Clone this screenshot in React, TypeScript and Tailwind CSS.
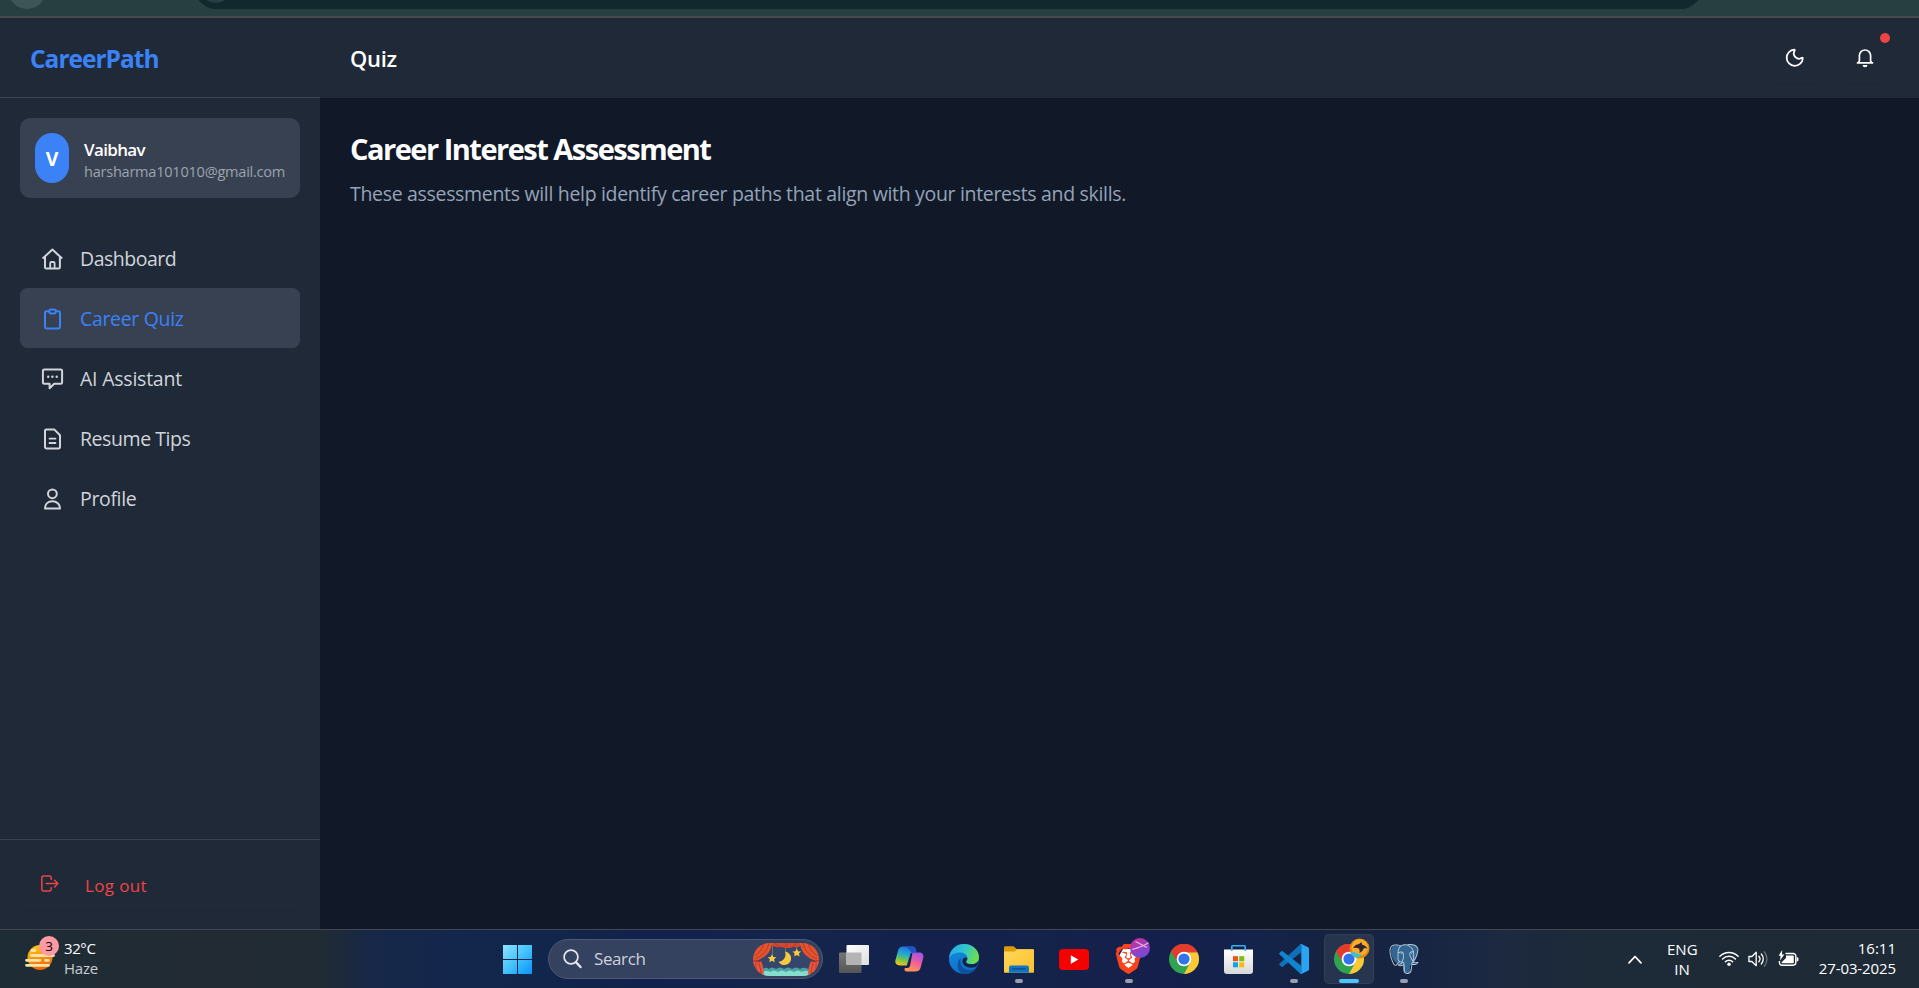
import type { ReactNode } from "react";
import { FaBrave } from "react-icons/fa6";
import { SiPostgresql } from "react-icons/si";
import { Moon } from "lucide-react";

function LineIcon({ children }: { children: ReactNode }) {
  return (
    <svg width="25" height="25" viewBox="0 0 25 25" fill="none" stroke="currentColor" strokeWidth="2" strokeLinejoin="round" className="shrink-0">
      {children}
    </svg>
  );
}

const homeIcon = (
  <LineIcon>
    <path d="M2.600 12.600 12.400 3.500l9.800 9.100" />
    <path d="M5 11v10.200a1.300 1.300 0 0 0 1.300 1.300h12.300a1.300 1.300 0 0 0 1.300-1.300V11" />
    <path d="M10.200 22.500v-5.300a1.200 1.200 0 0 1 1.200-1.200h2a1.200 1.200 0 0 1 1.200 1.200v5.300" strokeWidth="1.800" />
  </LineIcon>
);

const clipboardIcon = (
  <LineIcon>
    <path d="M9 5.200H6.400A1.400 1.400 0 0 0 5 6.600v14.500a1.400 1.400 0 0 0 1.400 1.400h12.200a1.400 1.400 0 0 0 1.400-1.400V6.600a1.400 1.400 0 0 0-1.400-1.400H16" />
    <rect x="9.200" y="3.400" width="6.600" height="4" rx="1.800" />
  </LineIcon>
);

const chatIcon = (
  <LineIcon>
    <path d="M4.400 3.400h16.200a1.500 1.500 0 0 1 1.500 1.500v11.300a1.500 1.500 0 0 1-1.500 1.500h-6.400l-4.600 4.600v-4.600H4.400a1.500 1.500 0 0 1-1.500-1.500V4.900a1.500 1.500 0 0 1 1.500-1.500Z" />
    <g fill="currentColor" stroke="none">
      <circle cx="8.200" cy="10.800" r="1.200" />
      <circle cx="12.400" cy="10.800" r="1.200" />
      <circle cx="16.700" cy="10.800" r="1.200" />
    </g>
  </LineIcon>
);

const documentIcon = (
  <LineIcon>
    <path d="M14.200 3.400H6.400A1.400 1.400 0 0 0 5 4.800v16.300a1.400 1.400 0 0 0 1.400 1.400h12.200a1.400 1.400 0 0 0 1.400-1.400V9.300Z" />
    <path d="M8.800 12.600h7.400M8.800 17h7.400" strokeWidth="1.800" />
  </LineIcon>
);

const profileIcon = (
  <LineIcon>
    <circle cx="12.400" cy="7.800" r="4.400" />
    <path d="M5 22.500c0-4.200 3-7.200 7.400-7.200s7.600 3 7.600 7.200Z" />
  </LineIcon>
);

const navItems = [
  { label: "Dashboard", icon: homeIcon, style: "text-[#d1d5db] tracking-[-0.5px]" },
  { label: "Career Quiz", icon: clipboardIcon, style: "bg-[#374151] text-[#3b82f6] tracking-[-0.33px]" },
  { label: "AI Assistant", icon: chatIcon, style: "text-[#d1d5db] tracking-[-0.23px]" },
  { label: "Resume Tips", icon: documentIcon, style: "text-[#d1d5db] tracking-[-0.43px]" },
  { label: "Profile", icon: profileIcon, style: "text-[#d1d5db] tracking-[-0.35px]" },
];

function BrowserStrip() {
  return (
    <div className="flex h-[18px] shrink-0 items-end overflow-hidden border-b-2 border-[#454a4a] bg-[#283f42]">
      <div className="mb-[7px] ml-[8px] h-[40px] w-[38px] shrink-0 rounded-full bg-[#3d5557]" />
      <div className="mb-[7px] ml-[149px] flex h-[42px] w-[1507px] shrink-0 items-end rounded-full bg-[#11292c]">
        <div className="mb-[6px] ml-[5px] size-[32px] rounded-full bg-[#283f42]" />
      </div>
    </div>
  );
}

function Sidebar() {
  return (
    <aside className="flex w-[320px] shrink-0 flex-col bg-[#1f2937]">
      <div className="flex h-[80px] items-center border-b border-[#374151] px-[30px] pt-1">
        <span className="text-[24.5px] font-bold tracking-[-1px] text-[#3b82f6]">CareerPath</span>
      </div>
      <div className="mx-5 mt-5 flex h-[80px] items-center rounded-[10px] bg-[#374151] px-[15px]">
        <div className="flex h-[50px] w-[34px] shrink-0 items-center justify-center rounded-full bg-[#3b82f6] pt-0.5 text-[19.5px] font-bold text-white">V</div>
        <div className="ml-[15px] flex flex-col">
          <span className="pt-px text-[17px] leading-[25px] font-semibold tracking-[-0.65px] text-white">Vaibhav</span>
          <span className="-mt-px text-[14.6px] leading-[20px] tracking-[-0.27px] text-[#9ca3af]">harsharma101010@gmail.com</span>
        </div>
      </div>
      <nav className="mx-5 mt-[30px] flex flex-1 flex-col">
        {navItems.map((item) => (
          <a key={item.label} className={`flex h-[60px] items-center gap-[15px] rounded-[7.5px] px-5 text-[19.5px] ${item.style}`}>
            {item.icon}
            <span className="pt-0.5">{item.label}</span>
          </a>
        ))}
      </nav>
      <div className="border-t border-[#374151] px-5 pt-5 pb-[19px]">
        <button className="flex h-[50px] w-full items-center rounded-[7.5px] pl-5 text-[#ef4444] shadow-xs">
          <svg width="20" height="20" viewBox="0 0 20 20" fill="none" stroke="currentColor" strokeWidth="1.500" className="-mt-[2px]">
            <path d="M11.200 6V3.900a1.800 1.800 0 0 0-1.800-1.800H3.600a1.800 1.800 0 0 0-1.800 1.800v11.400a1.800 1.800 0 0 0 1.800 1.800h5.800a1.800 1.800 0 0 0 1.800-1.800v-2.100" />
            <path d="M5.600 9.600h12M14.200 5.800l3.600 3.800-3.600 3.800" />
          </svg>
          <span className="ml-[25px] pt-0.5 text-[17px] font-medium tracking-[0.35px]">Log out</span>
        </button>
      </div>
    </aside>
  );
}

function PageHeader() {
  return (
    <header className="flex h-[80px] shrink-0 items-center justify-between bg-[#1f2937] pr-[29px] pl-[30px] shadow-xs">
      <h1 className="text-[22px] font-semibold tracking-[-0.3px] text-white">Quiz</h1>
      <div className="flex gap-5 text-white">
        <button className="flex size-[50px] items-center justify-center rounded-[7.5px] pb-px shadow-xs">
          <Moon size={21.5} strokeWidth={2} />
        </button>
        <button className="relative flex size-[50px] items-center justify-center rounded-[7.5px] pb-px shadow-xs">
          <svg width="20" height="20" viewBox="0 0 20 20" fill="none" stroke="currentColor" strokeWidth="1.700" strokeLinejoin="round">
            <path d="M1.800 14.900h16.400M3.500 14.900l.9-2V7.600a5.600 5.600 0 0 1 11.200 0v5.300l.9 2" />
            <path d="M7.600 17.100h4.800a2.400 2.200 0 0 1-4.800 0Z" fill="currentColor" stroke="none" />
          </svg>
          <span className="absolute top-0 right-0 size-[10px] rounded-full bg-[#ef4444]" />
        </button>
      </div>
    </header>
  );
}

function WindowsLogo() {
  return (
    <svg width="29" height="29" viewBox="0 0 29 29">
      <defs>
        <linearGradient id="win" gradientUnits="userSpaceOnUse" x1="0" y1="0" x2="29" y2="29">
          <stop offset="0" stopColor="#8fe3ff" />
          <stop offset="0.500" stopColor="#43c2fb" />
          <stop offset="1" stopColor="#0a93fb" />
        </linearGradient>
      </defs>
      <path fill="url(#win)" d="M0 0h14v14H0zM15 0h14v14H15zM0 15h14v14H0zM15 15h14v14H15z" />
    </svg>
  );
}

function CurtainArt() {
  return (
    <svg width="66" height="33" viewBox="0 0 66 33" className="rounded-full">
      <rect width="66" height="33" fill="#34466b" />
      <path d="M9 27q3-4 7-1 3-3 7 0 4-3 8 0 4-3 8 0 4-3 8 0 4-3 10 1v7H9Z" fill="#4aa39e" />
      <path d="M9 30q4-4 8-1 4-3 8 0 4-3 8 0 4-3 8 0 4-3 8 0 4-3 8 1v6H9Z" fill="#86dccd" />
      <path d="M19.500 0v14M32.500 3v6M43.500 0v8" stroke="#a07a3a" strokeWidth="0.800" />
      <path d="M32 8.500a6.800 6.800 0 1 1-6.500 10.300A7.500 7.500 0 0 0 32 8.500Z" fill="#f5c93f" />
      <path d="m19 11.200 1.300 2.700 3 .3-2.200 2 .6 3-2.700-1.500-2.700 1.500.6-3-2.200-2 3-.3ZM43.800 5.500l1.300 2.700 3 .3-2.200 2 .6 3-2.700-1.500-2.700 1.500.6-3-2.200-2 3-.3Z" fill="#fbcb3c" />
      <path d="M15 0h36q-4 5-10 4-6 2-12 0-8 1-14-4Z" fill="#d9442c" />
      <path d="M0 0h19q-1 14-19 19ZM66 0H47q1 14 19 19Z" fill="#e4532f" />
      <path d="M0 18h8q3 6 3 15H0ZM66 18h-8q-3 6-3 15h11Z" fill="#e6573f" />
      <path d="M0 17.500q5 2 9 .5M66 17.500q-5 2-9 .5" stroke="#b52b26" strokeWidth="1.300" fill="none" />
      <g stroke="#b93424" strokeWidth="0.900" fill="none">
        <path d="M16 0Q14 11 2 16M11 0Q9 8 2 13M6 0Q5 5 1 8M50 0q2 11 14 16M55 0q2 8 9 13M60 0q1 5 5 8" />
        <path d="M3 20v12M6 20q2 6 2 13M63 20v12M60 20q-2 6-2 13M22 0q2 3 5 4M44 0q-2 3-5 4M33 0v4" />
      </g>
    </svg>
  );
}

function TaskViewIcon() {
  return (
    <svg width="30" height="28" viewBox="0 0 30 28">
      <defs>
        <linearGradient id="tv1" x1="0" y1="0" x2="0" y2="1">
          <stop offset="0" stopColor="#777" />
          <stop offset="1" stopColor="#555" />
        </linearGradient>
        <linearGradient id="tv2" x1="0" y1="0" x2="1" y2="1">
          <stop offset="0" stopColor="#fff" />
          <stop offset="1" stopColor="#dedede" />
        </linearGradient>
      </defs>
      <rect y="7.500" width="22.500" height="20.500" rx="1" fill="url(#tv1)" />
      <rect x="7.500" width="22.500" height="20" rx="1" fill="url(#tv2)" />
      <path d="M7.500 7.500h15V20h-15Z" fill="#b4b4b4" />
    </svg>
  );
}

function CopilotIcon() {
  return (
    <svg width="29" height="26" viewBox="0 0 29 26">
      <defs>
        <linearGradient id="cpA" x1="0.600" y1="0" x2="0.300" y2="1">
          <stop offset="0" stopColor="#1a6fe0" />
          <stop offset="0.400" stopColor="#22a6d8" />
          <stop offset="0.700" stopColor="#6cc551" />
          <stop offset="1" stopColor="#f0c419" />
        </linearGradient>
        <linearGradient id="cpB" x1="0.700" y1="0" x2="0.300" y2="1">
          <stop offset="0" stopColor="#a452e8" />
          <stop offset="0.500" stopColor="#f0609a" />
          <stop offset="1" stopColor="#ff9b4a" />
        </linearGradient>
      </defs>
      <path d="M17.500 6.500H24c4 0 5 2.500 4.200 5.500l-2.600 9.500c-.8 3-2.600 4-5.600 4h-8c-2 0-3-1-2.200-3.500h2.700c1.500 0 2.200-1 2.600-2.500Z" fill="url(#cpB)" />
      <path d="M11.800 19.500H5c-4 0-5.300-2.500-4.500-5.500L3 4.800C3.800 1.600 5.500.5 8.500.5h9.200c2 0 2.600 1.200 3.100 3.200l.8 2.800h-4c-1.500 0-2 .8-2.400 2.200Z" fill="url(#cpA)" />
      <path d="M8.500.5h9.200c2 0 2.600 1.200 3.100 3.200l.8 2.800h-4c-3 0-3-6-9.100-6Z" fill="#2450c8" />
    </svg>
  );
}

function EdgeIcon() {
  return (
    <svg width="30" height="30" viewBox="0 0 30 30">
      <defs>
        <linearGradient id="edA" x1="0" y1="0.200" x2="1" y2="0.500">
          <stop offset="0" stopColor="#28a8e8" />
          <stop offset="0.500" stopColor="#30c6cf" />
          <stop offset="1" stopColor="#6fe04a" />
        </linearGradient>
        <linearGradient id="edB" x1="0.200" y1="0" x2="0.500" y2="1">
          <stop offset="0" stopColor="#1490df" />
          <stop offset="1" stopColor="#0c6dc9" />
        </linearGradient>
      </defs>
      <circle cx="15" cy="15" r="15" fill="url(#edB)" />
      <path d="M0 14C.8 6 7 0 15 0c8.500 0 15 6 15 13.200 0 4.300-3.300 7-7.200 7-3.600 0-5.800-1.200-5.800-2.400 0-.8 1.400-1.300 1.400-3.800 0-3-3-5.600-7.200-5.600C5.500 8.400 1 10.800 0 14Z" fill="url(#edA)" />
      <path d="M12 14.300c-2.500 7 3.500 12 9.500 11.700 2.700-.2 4.500-1 6.200-2.200C24.500 28.500 19.700 31 14.500 30 8 28 6.500 18 12 14.300Z" fill="#10509d" />
      <path d="M18.400 14c0 2.500-1.400 3-1.400 3.800 0 1.200 2.200 2.400 5.800 2.400 2.600 0 4.800-1.100 6.100-2.800q.8-.2.600.8l-1.900 4q-.6.600-1.300.8c-6 2.200-12.400-.6-13-5.400 0-3.400 2.500-5 5.200-3.600Z" fill="#12224c" />
    </svg>
  );
}

function ExplorerIcon() {
  return (
    <svg width="30" height="27" viewBox="0 0 30 27">
      <defs>
        <linearGradient id="fx" x1="0" y1="0" x2="1" y2="1">
          <stop offset="0" stopColor="#ffd95c" />
          <stop offset="1" stopColor="#fcbe2c" />
        </linearGradient>
      </defs>
      <path d="M0 1.500Q0 .3 1.200.3h8.300l3.500 3H29q1 0 1 1V14H0Z" fill="#dd9a0a" />
      <path d="M0 5.500h10.500L13 3.300h16q1 0 1 1V26q0 .8-.8.800H.8Q0 26.800 0 26Z" fill="url(#fx)" />
      <path d="M5 26.800v-5.300q0-2 2-2h16q2 0 2 2v5.300Z" fill="#1175c4" />
      <path d="M8.500 22.800h13" stroke="#0b4a86" strokeWidth="1.200" strokeLinecap="round" />
    </svg>
  );
}

function YoutubeIcon() {
  return (
    <svg width="30" height="21" viewBox="0 0 30 21">
      <rect width="30" height="21" rx="4" fill="#f70000" />
      <path d="M11.800 6.300v8.600l7.500-4.300Z" fill="#fff" />
    </svg>
  );
}

function ChromeIcon() {
  return (
    <svg width="30" height="30" viewBox="0 0 30 30">
      <circle cx="15" cy="15" r="15" fill="#31a350" />
      <path d="M15 15 2 7.500a15 15 0 0 1 26 0Z" fill="#e33b2e" />
      <path d="M15 8.200h13.400A15 15 0 0 1 15 30l6.200-11.200Z" fill="#fcc934" />
      <path d="M2 7.500 9 18.600 15 8.200h13.300l-.3-.7a15 15 0 0 0-26 0Z" fill="#e33b2e" />
      <circle cx="15" cy="15" r="7.300" fill="#fff" />
      <circle cx="15" cy="15" r="5.600" fill="#2f74ea" />
    </svg>
  );
}

function BraveIcon() {
  return (
    <span className="relative -left-[1px] flex size-[30px] items-center justify-center">
      <svg width="24" height="28" viewBox="0 0 24 28" className="absolute">
        <path d="M7 4h10l4 7-3 10-6 4-6-4L3 11Z" fill="#fff" />
      </svg>
      <FaBrave className="relative h-[30px] w-[27px] text-[#f8431c]" />
      <svg width="20" height="20" viewBox="0 0 20 20" className="absolute -top-[6px] -right-[7px]">
        <defs>
          <linearGradient id="bb" x1="0.300" y1="0" x2="0.700" y2="1">
            <stop offset="0" stopColor="#c2329c" />
            <stop offset="1" stopColor="#6f4be0" />
          </linearGradient>
        </defs>
        <circle cx="10" cy="10" r="10" fill="url(#bb)" />
        <path d="M2 11.500Q12 9 18.500 4.800M5.500 3.500 17 9.500" stroke="#ecb4e4" strokeWidth="1.100" fill="none" />
      </svg>
    </span>
  );
}

function StoreIcon() {
  return (
    <svg width="29" height="29" viewBox="0 0 29 29" className="mr-px">
      <defs>
        <linearGradient id="st" x1="0" y1="0" x2="0" y2="1">
          <stop offset="0" stopColor="#fff" />
          <stop offset="1" stopColor="#d8d8d8" />
        </linearGradient>
      </defs>
      <path d="M0 4.500h29V26q0 3-3 3H3q-3 0-3-3Z" fill="url(#st)" />
      <path d="M7.800 6V1.600q0-.8.800-.8h11.800q.8 0 .8.800V6" fill="none" stroke="#2fb4f0" strokeWidth="1.600" />
      <path d="M9 11.200h5v5H9Z" fill="#f1511b" />
      <path d="M15.200 11.200h5v5h-5Z" fill="#80bb0a" />
      <path d="M9 17.300h5v5H9Z" fill="#0aa5ee" />
      <path d="M15.200 17.300h5v5h-5Z" fill="#fbb90a" />
    </svg>
  );
}

function VsCodeIcon() {
  return (
    <svg width="30" height="30" viewBox="0 0 30 30">
      <path d="M22.300 0v8.300L3.700 22.800q-.7.500-1.400 0L.6 21.200q-.8-.8 0-1.600L20.800.8Z" fill="#0f6fb8" />
      <path d="M22.300 30v-8.300L3.700 7.200q-.7-.5-1.400 0L.6 8.800q-.8.800 0 1.600l20.200 18.800Z" fill="#1284cf" />
      <path d="M22.300 0 29 3.200q1 .5 1 1.600v20.400q0 1.100-1 1.600L22.300 30q-1 .2-1.500-.8 1.500.8 1.500-1V1.800q0-1.800-1.500-1 .5-1 1.500-.8Z" fill="#2aa4f2" />
    </svg>
  );
}

function ChromeProfileIcon() {
  return (
    <span className="relative flex size-[30px]">
      <ChromeIcon />
      <svg width="21" height="21" viewBox="0 0 21 21" className="absolute -top-[6px] -right-[6px]">
        <circle cx="10.500" cy="10.500" r="10" fill="#e08a16" />
        <circle cx="10.800" cy="9.500" r="8.300" fill="#fbab2a" />
        <path d="M4 10q2-3.500 6-4l2.500-2 .5 2.500q4 1 5.500 4l-3.500-.5q-1 3.500-4.500 5 .5-2.500-.5-4.500Q7 9.500 4 10Z" fill="#2e2530" />
        <path d="M1.500 14.500q3.500-1 5.500.5t5.500 1q-1.500 4-5 3.800-4-1.300-6-5.300Z" fill="#35c4d8" />
      </svg>
    </span>
  );
}

function PostgresIcon() {
  return (
    <span className="relative flex size-[30px] items-center justify-center">
      <svg width="30" height="30" viewBox="0 0 24 24" className="absolute">
        <path d="M4.500 1q3-.8 5.500.3 4-1.500 7-.3 3-.8 5 .5 2 2.500.5 6.500-1 3.500-3 6.500l3 .4-2 1.600-3.500.5-.5 5q-.5 1.500-2.500 1.500-2.300 0-2.500-2l-.3-5-2.700.3-.4-1.400-1.600.2Q3.500 14 2 9 .5 3 4.500 1Z" fill="#336791" />
      </svg>
      <SiPostgresql className="relative size-[30px] text-[#b9c9d9]" />
    </span>
  );
}

const pinned: { icon: ReactNode; state: "idle" | "open" | "active" }[] = [
  { icon: <TaskViewIcon />, state: "idle" },
  { icon: <CopilotIcon />, state: "idle" },
  { icon: <EdgeIcon />, state: "idle" },
  { icon: <ExplorerIcon />, state: "open" },
  { icon: <YoutubeIcon />, state: "idle" },
  { icon: <BraveIcon />, state: "open" },
  { icon: <ChromeIcon />, state: "idle" },
  { icon: <StoreIcon />, state: "idle" },
  { icon: <VsCodeIcon />, state: "open" },
  { icon: <ChromeProfileIcon />, state: "active" },
  { icon: <PostgresIcon />, state: "open" },
];

const tileStyle = {
  idle: "",
  open: "",
  active: "bg-white/8 ring-1 ring-inset ring-white/5",
};

const barStyle = {
  idle: "",
  open: "h-1 w-2 rounded-full bg-[#9a9fb0]",
  active: "h-1 w-5 rounded-full bg-[#4cc2ff]",
};

function Taskbar() {
  return (
    <footer className="flex h-[59px] shrink-0 items-center border-t border-[#404753] bg-[linear-gradient(90deg,#1e2c36_0px,#222b33_200px,#212b34_320px,#172848_370px,#13264c_460px,#12254a_560px,#13214d_660px,#14244a_820px,#13214c_940px,#14234a_1040px,#151f4b_1150px,#13234b_1250px,#15233f_1330px,#172544_1420px,#1c2940_1500px,#1d2a37_1600px,#1e2b36_1919px)] text-white">
      <div className="flex w-[490px] items-center pb-0.5">
        <span className="relative ml-[25px] flex h-[44px] w-[39px]">
          <svg width="30" height="34" viewBox="0 0 30 34" className="mt-[6px]">
            <defs>
              <linearGradient id="sun" x1="0" y1="0" x2="0.300" y2="1">
                <stop offset="0" stopColor="#ffd21a" />
                <stop offset="1" stopColor="#f0680a" />
              </linearGradient>
            </defs>
            <circle cx="15" cy="15.500" r="12.500" fill="url(#sun)" />
            <g stroke="#fbe3a6" strokeWidth="2.800" strokeLinecap="round">
              <path d="M7 8.500h3M6.500 13.500h22M1.500 18.300h13.500M20.500 18.300h3M1.500 23.300h22" />
            </g>
          </svg>
          <span className="absolute top-0 left-[14px] flex size-5 items-center justify-center rounded-full bg-[#ff99a4] text-[13.5px] text-black">3</span>
        </span>
        <span className="flex flex-col text-[15px] leading-5">
          <span className="tracking-[-0.4px]">32°C</span>
          <span className="tracking-[-0.2px] text-[#c9cdd2]">Haze</span>
        </span>
      </div>
      <div className="flex w-[58px] pl-[13px]">
        <WindowsLogo />
      </div>
      <div className="mr-[3.5px] flex h-10 w-[275px] items-center rounded-full border border-[#4b5879] bg-[#35425f] pr-[3px] pl-[14px]">
        <svg width="19" height="20" viewBox="0 0 19 20" fill="none" stroke="#e4e7ee">
          <circle cx="8" cy="8" r="6.900" strokeWidth="1.700" />
          <path d="m13 13.200 4.500 4.800" strokeWidth="2.400" strokeLinecap="round" />
        </svg>
        <span className="ml-[12px] flex-1 text-[17px] tracking-[-0.4px] text-[#ccd1dc]">Search</span>
        <CurtainArt />
      </div>
      {pinned.map((app, i) => (
        <div key={i} className="flex h-[58px] w-[55px] justify-center pt-1">
          <div className={`relative flex size-[50px] items-center justify-center rounded-[5px] ${tileStyle[app.state]}`}>
            {app.icon}
            <span className={`absolute bottom-[1px] ${barStyle[app.state]}`} />
          </div>
        </div>
      ))}
      <div className="flex flex-1 items-center justify-end pr-[23px] text-[15px] leading-5">
        <svg width="14" height="9" viewBox="0 0 14 9" fill="none" stroke="currentColor" strokeWidth="1.700" strokeLinecap="round" strokeLinejoin="round">
          <path d="m1 7.800 6-6.300 6 6.300" />
        </svg>
        <span className="ml-[25px] w-[30px] pb-px text-center">
          ENG
          <br />
          IN
        </span>
        <svg width="20" height="16" viewBox="0 0 20 16" fill="none" stroke="currentColor" strokeWidth="1.500" strokeLinecap="round" className="ml-[22px]">
          <path d="M.9 5.200a12.900 12.900 0 0 1 18.200 0M3.600 8a9 9 0 0 1 12.800 0M6.400 10.700a5.100 5.100 0 0 1 7.200 0" />
          <circle cx="10" cy="13.300" r="1.700" fill="currentColor" stroke="none" />
        </svg>
        <svg width="21" height="18" viewBox="0 0 21 18" fill="none" stroke="currentColor" strokeWidth="1.300" strokeLinecap="round" strokeLinejoin="round" className="ml-[9px]">
          <path d="M.9 6.500h3l4.300-4.200v13.400l-4.300-4.200h-3Z" />
          <path d="M10.800 6.300a4 4 0 0 1 0 5.400M13.300 4a7.400 7.400 0 0 1 0 10" />
          <path d="M16.300 1.800a11 11 0 0 1 0 14.400" stroke="#66717c" />
        </svg>
        <svg width="21" height="18" viewBox="0 0 21 18" fill="none" className="ml-[9px]">
          <path d="M7.500 3.500h7.700a2.600 2.600 0 0 1 2.600 2.600v6.500a2.600 2.600 0 0 1-2.600 2.600H4a2.600 2.600 0 0 1-2.600-2.600v-1.500" stroke="currentColor" strokeWidth="1.400" />
          <path d="M8 5.500h6.800q1 0 1 1v5.700q0 1-1 1H4.500q-.9 0-.9-1L8 8Z" fill="currentColor" />
          <path d="M18.600 7.200q1.800 0 1.800 1v2.300q0 1-1.800 1Z" fill="currentColor" />
          <path d="M4.200 0 .6 5.800h2L2 10.500l4.300-6H4Z" fill="currentColor" />
        </svg>
        <span className="ml-[17px] w-[80px] pb-[3px] text-right">
          16:11
          <br />
          <span className="tracking-[-0.1px]">27-03-2025</span>
        </span>
      </div>
    </footer>
  );
}

export default function App() {
  return (
    <div className="flex h-[988px] w-full flex-col overflow-hidden bg-[#111827] font-['Open_Sans','Noto_Sans',sans-serif]">
      <BrowserStrip />
      <div className="flex min-h-0 flex-1">
        <Sidebar />
        <div className="flex flex-1 flex-col">
          <PageHeader />
          <main className="flex-1 bg-[#111827] px-[30px] pt-[28px]">
            <h2 className="text-[29px] leading-[45px] font-bold tracking-[-1.5px] text-white">Career Interest Assessment</h2>
            <p className="mt-[8px] text-[19.5px] leading-[30px] tracking-[-0.32px] text-[#94a3b8]">
              These assessments will help identify career paths that align with your interests and skills.
            </p>
          </main>
        </div>
      </div>
      <Taskbar />
    </div>
  );
}
